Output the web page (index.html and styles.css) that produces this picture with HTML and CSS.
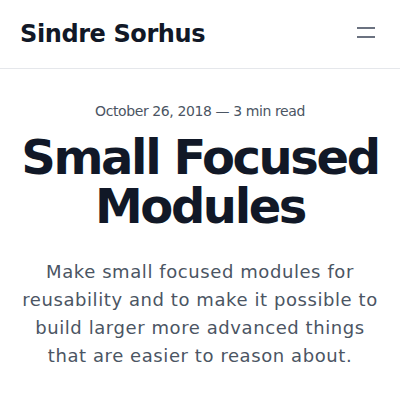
FILE: index.html
```html
<!DOCTYPE html>
<html lang="en">
<head>
<meta charset="utf-8">
<link rel="stylesheet" href="styles.css">
</head>
<body>
<header class="site-header">
  <a class="site-title" href="#">Sindre Sorhus</a>
  <button class="menu-btn" aria-label="Menu">
    <svg width="18" height="11" viewBox="0 0 18 11"><path d="M0 1h18M0 10h18" stroke="#6b7280" stroke-width="2" fill="none"/></svg>
  </button>
</header>
<main class="post">
  <p class="meta">October 26, 2018 — 3 min read</p>
  <h1 class="post-title">Small Focused Modules</h1>
  <p class="summary">Make small focused modules for reusability and to make it possible to build larger more advanced things that are easier to reason about.</p>
</main>
</body>
</html>
```
FILE: styles.css
```css
html, body { margin: 0; padding: 0; background: #fff; }
body { font-family: "DejaVu Sans", sans-serif; color: #111827; }
.site-header {
  display: flex; align-items: center; justify-content: space-between;
  height: 69px; padding: 0 25px 0 20px; border-bottom: 1px solid #e5e7eb;
  box-sizing: border-box;
}
.site-title { font-size: 24px; font-weight: bold; color: #111827; text-decoration: none; letter-spacing: -0.4px; }
.menu-btn { background: none; border: 0; padding: 0; display: flex; margin-top: -3px; }
.post { padding: 32px 16px; text-align: center; }
.meta { margin: 0; font-size: 14px; line-height: 20px; color: #4b5563; letter-spacing: -0.4px; }
.post-title { margin: 12px 0 0; font-size: 48px; line-height: 49px; font-weight: bold; color: #111827; letter-spacing: -0.05em; }
.summary { margin: 27px 0 0; font-size: 18px; line-height: 28px; color: #4b5563; letter-spacing: 0.58px; }
```
